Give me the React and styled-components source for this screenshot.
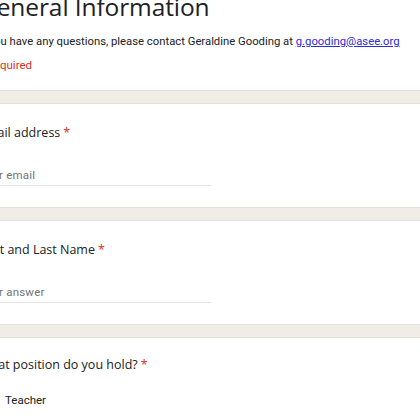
import React from "react";
import styled, { createGlobalStyle } from "styled-components";

const Global = createGlobalStyle`
  html, body { margin: 0; padding: 0; background: #f0ede6; overflow: hidden; }
  body { font-family: Roboto, "Liberation Sans", sans-serif; color: #202124; }
`;

const Viewport = styled.div`
  width: 420px;
  height: 420px;
  overflow: hidden;
  background: #f0ede6;
`;

const Column = styled.div`
  width: 640px;
  margin-left: -46px;
  margin-top: -14px;
  display: flex;
  flex-direction: column;
  gap: 12px;
`;

const Card = styled.section`
  background: #ffffff;
  border: 1px solid #e3e0d9;
  border-radius: 8px;
  padding: ${(p) => p.$pad || "19px 24px 21px"};
  display: flex;
  flex-direction: column;
`;

const Title = styled.h1`
  margin: 0;
  font-family: "Open Sans", Roboto, sans-serif;
  font-weight: 400;
  font-size: 24.5px;
  line-height: 40px;
  letter-spacing: -0.1px;
  color: #202124;
`;

const Description = styled.p`
  margin: 6px 0 0;
  font-family: Roboto, sans-serif;
  font-size: 11.3px;
  line-height: 18px;
  color: #202124;
  a { color: #2b2bd9; }
`;

const Required = styled.div`
  margin-top: 5px;
  font-family: Roboto, sans-serif;
  font-size: 11.5px;
  line-height: 18px;
  color: #d93025;
`;

const Label = styled.div`
  font-family: "Open Sans", Roboto, sans-serif;
  font-size: 12.5px;
  line-height: 20px;
  color: #202124;
`;

const Star = styled.span`
  color: #d93025;
  margin-left: 3px;
`;

const Input = styled.div`
  margin-top: 22px;
  width: 232px;
  height: 20px;
  border-bottom: 1px solid #e0e0e0;
  font-family: Roboto, sans-serif;
  font-size: 11.5px;
  line-height: 20px;
  color: #70757a;
  letter-spacing: 0.2px;
`;

const Option = styled.label`
  margin-top: 16px;
  display: flex;
  align-items: center;
  gap: 8px;
  font-family: Roboto, sans-serif;
  font-size: 11.5px;
  color: #202124;
`;

const Radio = styled.span`
  width: 14px;
  height: 14px;
  border: 2px solid #5f6368;
  border-radius: 50%;
  flex: none;
`;

export default function App() {
  return (
    <>
      <Global />
      <Viewport>
        <Column>
          <Card $pad="0 24px 16px">
            <Title>General Information</Title>
            <Description>
              If you have any questions, please contact Geraldine Gooding at{" "}
              <a href="#">g.gooding@asee.org</a>
            </Description>
            <Required>* Required</Required>
          </Card>
          <Card>
            <Label>
              Email address<Star>*</Star>
            </Label>
            <Input>Your email</Input>
          </Card>
          <Card>
            <Label>
              First and Last Name<Star>*</Star>
            </Label>
            <Input>Your answer</Input>
          </Card>
          <Card $pad="17px 24px 21px">
            <Label>
              What position do you hold?<Star>*</Star>
            </Label>
            <Option>
              <Radio />
              Teacher
            </Option>
          </Card>
        </Column>
      </Viewport>
    </>
  );
}
